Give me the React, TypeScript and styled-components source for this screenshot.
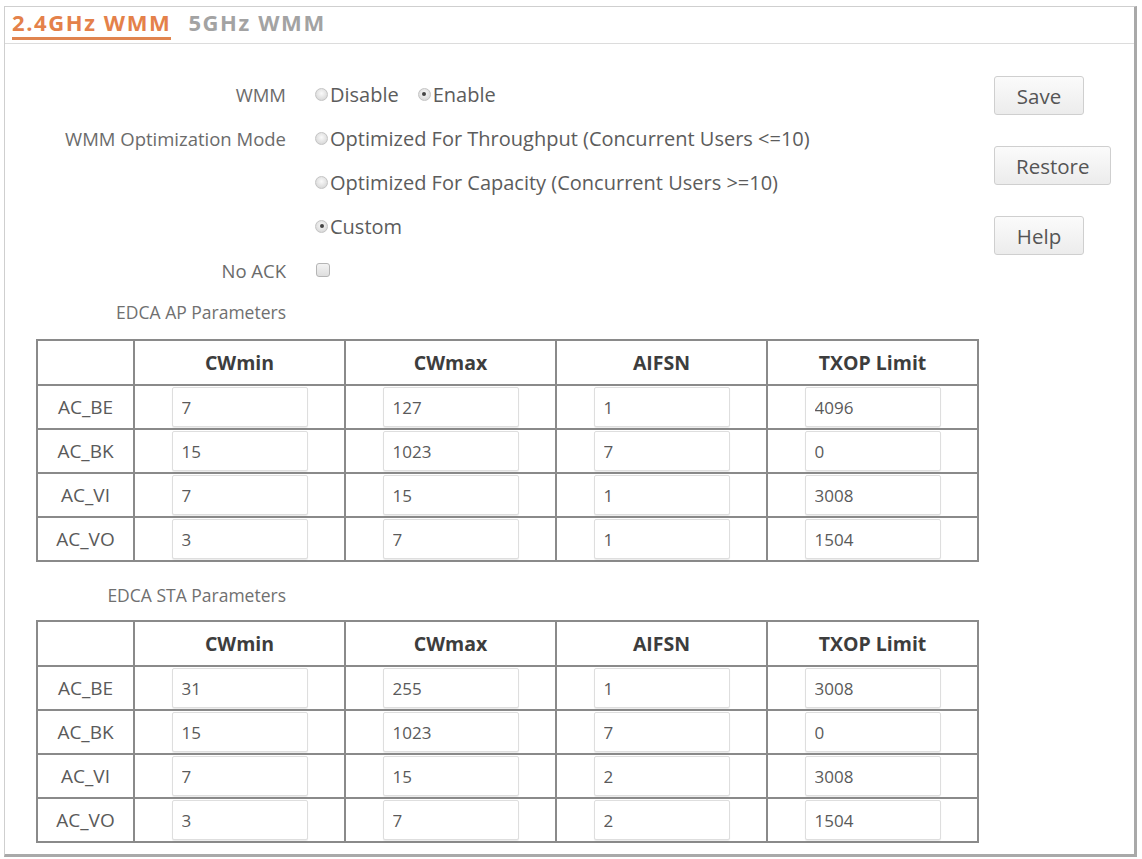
import React from "react";
import styled, { createGlobalStyle } from "styled-components";

const Global = createGlobalStyle`
  html, body { margin: 0; padding: 0; background: #ffffff; }
  body { font-family: "Open Sans", "Noto Sans", sans-serif; color: #666; }
  * { box-sizing: border-box; }
`;

const Frame = styled.div`
  margin: 6px 0 0 4px;
  width: 1133px;
  height: 851px;
  border: 1px solid #cfcfcf;
  border-right: 3px solid #a9a9a9;
  border-bottom: 3px solid #a9a9a9;
  display: flex;
  flex-direction: column;
`;

const TabBar = styled.div`
  height: 37px;
  border-bottom: 1px solid #dcdcdc;
  display: flex;
  align-items: flex-end;
  gap: 17px;
  padding-left: 7px;
`;

const Tab = styled.div<{ $active?: boolean }>`
  font-size: 22px;
  font-weight: 700;
  letter-spacing: 1.6px;
  color: ${(p) => (p.$active ? "#e4814a" : "#a3a3a3")};
  line-height: 28px;
  padding-bottom: 1px;
  border-bottom: 3px solid ${(p) => (p.$active ? "#e0844f" : "transparent")};
  margin-bottom: 3px;
`;

const Body = styled.div`
  flex: 1;
  display: flex;
`;

const Main = styled.div`
  flex: 1;
  padding-top: 28px;
  display: flex;
  flex-direction: column;
`;

const FormRow = styled.div`
  height: 44px;
  display: grid;
  grid-template-columns: 281px 1fr;
  column-gap: 29px;
  align-items: center;
`;

const Label = styled.div`
  text-align: right;
  font-size: 18.5px;
  color: #6b6b6b;
  white-space: nowrap;
`;

const Options = styled.div`
  display: flex;
  align-items: center;
  gap: 19px;
  font-size: 20px;
  color: #5c5c5c;
`;

const Option = styled.label`
  display: flex;
  align-items: center;
  white-space: nowrap;
`;

const RadioDot = styled.span<{ $on?: boolean }>`
  width: 13px;
  height: 13px;
  border-radius: 50%;
  margin-right: 2px;
  background: radial-gradient(circle at 50% 40%, #fafafa 0%, #dcdcdc 70%, #c4c4c4 100%);
  border: 1px solid #c4c4c4;
  position: relative;
  &::after {
    content: "";
    display: ${(p) => (p.$on ? "block" : "none")};
    position: absolute;
    left: 3.5px;
    top: 3.5px;
    width: 4px;
    height: 4px;
    border-radius: 50%;
    background: #444;
  }
`;

const Check = styled.span`
  width: 14px;
  height: 14px;
  border: 1px solid #b5b5b5;
  border-radius: 3px;
  background: linear-gradient(#f3f3f3, #dedede);
  margin-left: 1px;
`;

const Section = styled.div`
  height: 40px;
  display: grid;
  grid-template-columns: 281px 1fr;
  align-items: center;
`;

const SectionLabel = styled.div`
  text-align: right;
  font-size: 17.5px;
  color: #707070;
  white-space: nowrap;
`;

const Table = styled.table`
  margin-left: 31px;
  width: 943px;
  border-collapse: collapse;
  border: 2px solid #707070;
  table-layout: fixed;
`;

const Th = styled.th`
  height: 45px;
  border: 2px solid #8a8a8a;
  font-size: 19.5px;
  font-weight: 700;
  color: #3d3d3d;
  text-align: center;
  padding: 0;
`;

const RowHead = styled.td`
  height: 44px;
  border: 2px solid #8a8a8a;
  text-align: center;
  font-size: 19px;
  color: #5a5a5a;
  padding: 0;
`;

const Cell = styled.td`
  height: 44px;
  border: 2px solid #8a8a8a;
  text-align: center;
  padding: 0;
`;

const Input = styled.input`
  width: 136px;
  height: 40px;
  border: 1px solid #dedede;
  border-radius: 2px;
  box-shadow: 0 1px 1px rgba(0, 0, 0, 0.08);
  font-family: "Open Sans", "Noto Sans", sans-serif;
  font-size: 17px;
  color: #5a5a5a;
  padding: 0 9px;
  vertical-align: middle;
  background: #fff;
`;

const Gap = styled.div<{ $h: number }>`
  height: ${(p) => p.$h}px;
`;

const Sidebar = styled.div`
  width: 140px;
  padding-top: 32px;
  display: flex;
  flex-direction: column;
  align-items: flex-start;
  gap: 31px;
`;

const Button = styled.button`
  height: 39px;
  min-width: 90px;
  padding: 0 21px;
  border: 1px solid #cfcfcf;
  border-radius: 3px;
  background: linear-gradient(#fbfbfb, #ececec);
  font-family: "Open Sans", "Noto Sans", sans-serif;
  font-size: 20.5px;
  color: #555;
`;

type Row = [string, number, number, number, number];

const apRows: Row[] = [
  ["AC_BE", 7, 127, 1, 4096],
  ["AC_BK", 15, 1023, 7, 0],
  ["AC_VI", 7, 15, 1, 3008],
  ["AC_VO", 3, 7, 1, 1504],
];

const staRows: Row[] = [
  ["AC_BE", 31, 255, 1, 3008],
  ["AC_BK", 15, 1023, 7, 0],
  ["AC_VI", 7, 15, 2, 3008],
  ["AC_VO", 3, 7, 2, 1504],
];

const ParamTable = ({ rows }: { rows: Row[] }) => (
  <Table>
    <colgroup>
      <col style={{ width: 97 }} />
      <col />
      <col />
      <col />
      <col />
    </colgroup>
    <thead>
      <tr>
        <Th />
        <Th>CWmin</Th>
        <Th>CWmax</Th>
        <Th>AIFSN</Th>
        <Th>TXOP Limit</Th>
      </tr>
    </thead>
    <tbody>
      {rows.map((r) => (
        <tr key={r[0]}>
          <RowHead>{r[0]}</RowHead>
          {r.slice(1).map((v, i) => (
            <Cell key={i}>
              <Input defaultValue={String(v)} />
            </Cell>
          ))}
        </tr>
      ))}
    </tbody>
  </Table>
);

export default function App() {
  return (
    <>
      <Global />
      <Frame>
        <TabBar>
          <Tab $active>2.4GHz WMM</Tab>
          <Tab>5GHz WMM</Tab>
        </TabBar>
        <Body>
          <Main>
            <FormRow>
              <Label>WMM</Label>
              <Options>
                <Option>
                  <RadioDot />
                  Disable
                </Option>
                <Option>
                  <RadioDot $on />
                  Enable
                </Option>
              </Options>
            </FormRow>
            <FormRow>
              <Label>WMM Optimization Mode</Label>
              <Options>
                <Option>
                  <RadioDot />
                  Optimized For Throughput (Concurrent Users &lt;=10)
                </Option>
              </Options>
            </FormRow>
            <FormRow>
              <Label />
              <Options>
                <Option>
                  <RadioDot />
                  Optimized For Capacity (Concurrent Users &gt;=10)
                </Option>
              </Options>
            </FormRow>
            <FormRow>
              <Label />
              <Options>
                <Option>
                  <RadioDot $on />
                  Custom
                </Option>
              </Options>
            </FormRow>
            <FormRow>
              <Label>No ACK</Label>
              <Options>
                <Check />
              </Options>
            </FormRow>
            <Section>
              <SectionLabel>EDCA AP Parameters</SectionLabel>
            </Section>
            <Gap $h={7} />
            <ParamTable rows={apRows} />
            <Gap $h={13} />
            <Section>
              <SectionLabel>EDCA STA Parameters</SectionLabel>
            </Section>
            <Gap $h={5} />
            <ParamTable rows={staRows} />
          </Main>
          <Sidebar>
            <Button>Save</Button>
            <Button>Restore</Button>
            <Button>Help</Button>
          </Sidebar>
        </Body>
      </Frame>
    </>
  );
}
